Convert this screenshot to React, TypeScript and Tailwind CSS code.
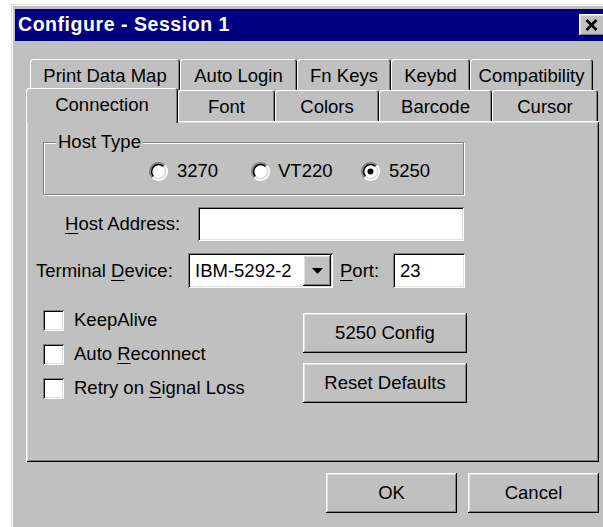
import type { ReactNode } from "react";

// classic 3D bevels
const raised =
  "shadow-[inset_-1px_-1px_0_#000,inset_1px_1px_0_#fff,inset_-2px_-2px_0_#808080,inset_2px_2px_0_#dfdfdf]";
const sunken =
  "shadow-[inset_1px_1px_0_#808080,inset_-1px_-1px_0_#fff,inset_2px_2px_0_#000,inset_-2px_-2px_0_#dfdfdf]";

const backRow = [
  { label: "Print Data Map", w: "w-[150px]" },
  { label: "Auto Login", w: "w-[117px]" },
  { label: "Fn Keys", w: "w-[94px]" },
  { label: "Keybd", w: "w-[79px]" },
  { label: "Compatibility", w: "w-[123px]" },
];

const frontRow = [
  { label: "Font", w: "w-[97px]" },
  { label: "Colors", w: "w-[104px]" },
  { label: "Barcode", w: "w-[113px]" },
  { label: "Cursor", w: "w-[106px]" },
];

function Tab({ label, w }: { label: string; w: string }) {
  return (
    <div
      className={`${w} h-full flex items-center justify-center pt-[2px] rounded-t-[3px] whitespace-nowrap shadow-[inset_1px_1px_0_#fff,inset_-1px_0_0_#000,inset_-2px_0_0_#808080]`}
    >
      {label}
    </div>
  );
}

function Radio({ checked }: { checked?: boolean }) {
  return (
    <svg width="19" height="19" viewBox="0 0 12 12" className="shrink-0">
      <circle cx="6" cy="6" r="4.5" fill="#fff" />
      <path d="M2.11 9.89A5.5 5.5 0 0 1 9.89 2.11" stroke="#808080" fill="none" />
      <path d="M9.89 2.11A5.5 5.5 0 0 1 2.11 9.89" stroke="#fff" fill="none" />
      <path d="M2.82 9.18A4.5 4.5 0 0 1 9.18 2.82" stroke="#000" fill="none" />
      <path d="M9.18 2.82A4.5 4.5 0 0 1 2.82 9.18" stroke="#dfdfdf" fill="none" />
      {checked && <circle cx="6" cy="6" r="1.9" fill="#000" />}
    </svg>
  );
}

function Check({ children }: { children: ReactNode }) {
  return (
    <div className="flex items-center h-[34px]">
      <div className={`w-[21px] h-[21px] bg-white shrink-0 ${sunken}`} />
      <span className="ml-[10px] whitespace-nowrap">{children}</span>
    </div>
  );
}

function Button({ children, w }: { children: ReactNode; w: string }) {
  return (
    <div className={`${w} h-[40px] flex items-center justify-center bg-[#c0c0c0] ${raised}`}>
      {children}
    </div>
  );
}

const Key = ({ c }: { c: string }) => <span className="underline underline-offset-[3px]">{c}</span>;

export default function App() {
  return (
    <div className="w-[603px] h-[527px] overflow-hidden bg-white font-['Liberation_Sans',Arial,sans-serif] text-[18.5px] text-black">
      <div
        className={`ml-[11px] mt-[4px] w-[603px] h-[560px] bg-[#c0c0c0] p-[4px] pt-[5px] shadow-[inset_1px_1px_0_#dfdfdf,inset_2px_2px_0_#fff,inset_-1px_-1px_0_#000,inset_-2px_-2px_0_#808080]`}
      >
        {/* title bar */}
        <div className="h-[32px] bg-[#000080] flex items-center pl-[3px] pr-[5px]">
          <span className="text-white font-bold text-[19.5px] tracking-[0.55px]">Configure - Session 1</span>
          <div className={`ml-auto w-[26px] h-[22px] bg-[#c0c0c0] flex items-center justify-center ${raised}`}>
            <svg width="13" height="12" viewBox="0 0 13 12" className="-ml-[2px]">
              <path d="M1.5 1l10 10M11.5 1l-10 10" stroke="#000" strokeWidth="2.6" />
            </svg>
          </div>
        </div>

        <div className="px-[11px] pt-[18px]">
          {/* tab strip, two rows */}
          <div className="flex h-[31px] pl-[4px]">
            {backRow.map((t) => (
              <Tab key={t.label} {...t} />
            ))}
          </div>
          <div className="flex items-end h-[31px]">
            <div className="relative z-10 w-[152px] h-[35px] -mb-[2px] bg-[#c0c0c0] flex items-center justify-center pb-[2px] rounded-t-[3px] shadow-[inset_1px_1px_0_#fff,inset_-1px_0_0_#000,inset_-2px_0_0_#808080]">
              Connection
            </div>
            {frontRow.map((t) => (
              <Tab key={t.label} {...t} />
            ))}
          </div>

          {/* Connection page */}
          <div className="h-[341px] shadow-[inset_1px_1px_0_#fff,inset_-1px_-1px_0_#000,inset_2px_2px_0_#dfdfdf,inset_-2px_-2px_0_#808080]">
            <div className="pt-[21px] pl-[17px]">
              <div className="relative w-[421px] h-[53px] border border-[#808080] shadow-[inset_1px_1px_0_#fff,1px_1px_0_#fff]">
                <span className="absolute -top-[12px] left-[12px] px-[2px] bg-[#c0c0c0] leading-[22px]">
                  Host Type
                </span>
                <div className="flex items-center h-[20px] mt-[18px] ml-[105px]">
                  <label className="flex items-center gap-[9px] w-[102px]">
                    <Radio />
                    3270
                  </label>
                  <label className="flex items-center gap-[8px] w-[110px]">
                    <Radio />
                    VT220
                  </label>
                  <label className="flex items-center gap-[9px]">
                    <Radio checked />
                    5250
                  </label>
                </div>
              </div>
            </div>

            <div className="flex items-center mt-[12px] ml-[39px]">
              <span className="w-[133px] whitespace-nowrap">
                <Key c="H" />
                ost Address:
              </span>
              <div className={`w-[266px] h-[34px] bg-white ${sunken}`} />
            </div>

            <div className="flex items-center mt-[12px] ml-[10px]">
              <span className="w-[152px] whitespace-nowrap">
                Terminal <Key c="D" />
                evice:
              </span>
              <div className={`w-[145px] h-[35px] bg-white p-[2px] flex items-center ${sunken}`}>
                <span className="pl-[5px] flex-1 whitespace-nowrap">IBM-5292-2</span>
                <div className={`w-[28px] h-full bg-[#c0c0c0] flex items-center justify-center ${raised}`}>
                  <svg width="11" height="6" viewBox="0 0 11 6">
                    <path d="M0 0h11L5.5 6z" fill="#000" />
                  </svg>
                </div>
              </div>
              <span className="ml-[7px] w-[53px] whitespace-nowrap">
                <Key c="P" />
                ort:
              </span>
              <div className={`w-[72px] h-[35px] bg-white flex items-center pl-[7px] ${sunken}`}>23</div>
            </div>

            <div className="flex items-start mt-[15px]">
              <div className="ml-[17px] w-[260px]">
                <Check>KeepAlive</Check>
                <Check>
                  Auto <Key c="R" />
                  econnect
                </Check>
                <Check>
                  Retry on <Key c="S" />
                  ignal Loss
                </Check>
              </div>
              <div className="mt-[10px] flex flex-col gap-[10px]">
                <Button w="w-[164px]">5250 Config</Button>
                <Button w="w-[164px]">Reset Defaults</Button>
              </div>
            </div>
          </div>

          <div className="flex justify-end gap-[11px] mt-[11px]">
            <Button w="w-[131px]">OK</Button>
            <Button w="w-[131px]">Cancel</Button>
          </div>
        </div>
      </div>
    </div>
  );
}
